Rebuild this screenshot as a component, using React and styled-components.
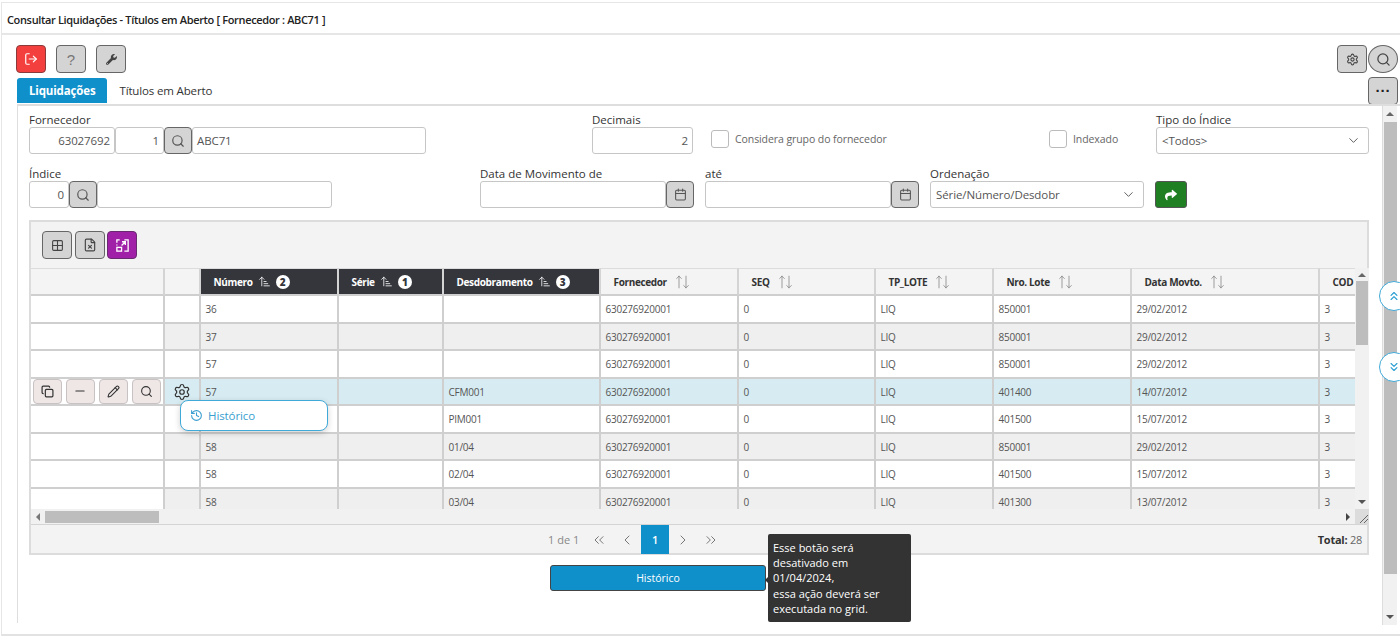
import React from 'react';
import styled, { createGlobalStyle } from 'styled-components';
import {
  LogOut,
  Search,
  Calendar,
  Settings,
  ChevronDown,
  Grid2x2,
  FileX,
  ArrowUpNarrowWide,
  Copy,
  Minus,
  Pencil,
  History,
  ChevronsUp,
  ChevronsDown,
  ChevronsLeft,
  ChevronsRight,
  ChevronLeft,
  ChevronRight,
  MoveUp,
  MoveDown,
} from 'lucide-react';
import { FaWrench, FaShare } from 'react-icons/fa';

const COLUMNS = '134px 36px 138px 105px 157px 138px 137px 118px 138px 188px 80px';

const rows = [
  { num: '36', desd: '', lote: '850001', date: '29/02/2012' },
  { num: '37', desd: '', lote: '850001', date: '29/02/2012' },
  { num: '57', desd: '', lote: '850001', date: '29/02/2012' },
  { num: '57', desd: 'CFM001', lote: '401400', date: '14/07/2012', selected: true },
  { num: '', desd: 'PIM001', lote: '401500', date: '15/07/2012' },
  { num: '58', desd: '01/04', lote: '850001', date: '29/02/2012' },
  { num: '58', desd: '02/04', lote: '401500', date: '15/07/2012' },
  { num: '58', desd: '03/04', lote: '401300', date: '13/07/2012' },
];

function App() {
  return (
    <>
      <GlobalStyle />
      <Frame>
        <TitleBar>Consultar Liquidações - Títulos em Aberto [ Fornecedor : ABC71 ]</TitleBar>
        <Toolbar>
          <IconButton $bg="#f43f3f" $color="#fff" $border="#8a3a3a">
            <LogOut size={14} />
          </IconButton>
          <IconButton>
            <HelpMark>?</HelpMark>
          </IconButton>
          <IconButton>
            <FaWrench size={11} />
          </IconButton>
          <ToolbarRight>
            <IconButton>
              <Settings size={13} />
            </IconButton>
            <RoundButton>
              <Search size={15} />
            </RoundButton>
          </ToolbarRight>
        </Toolbar>
        <TabRow>
          <Tab $active>Liquidações</Tab>
          <Tab>Títulos em Aberto</Tab>
          <MoreButton>···</MoreButton>
        </TabRow>
        <Panel>
          <Content>
            <FormRow>
              <Field $width={397}>
                <Label>Fornecedor</Label>
                <Joined>
                  <Input $width={86} $right>63027692</Input>
                  <Input $width={49} $right>1</Input>
                  <AddonButton>
                    <Search size={14} />
                  </AddonButton>
                  <Input $grow>ABC71</Input>
                </Joined>
              </Field>
              <Field $width={101} $left={166}>
                <Label>Decimais</Label>
                <Input $right>2</Input>
              </Field>
              <CheckField $left={18} $width={338}>
                <CheckBox />
                Considera grupo do fornecedor
              </CheckField>
              <CheckField $left={0} $width={107}>
                <CheckBox />
                Indexado
              </CheckField>
              <Field $width={213}>
                <Label>Tipo do Índice</Label>
                <Select>
                  &lt;Todos&gt;
                  <ChevronDown size={15} strokeWidth={1.5} />
                </Select>
              </Field>
            </FormRow>
            <FormRow>
              <Field $width={303}>
                <Label>Índice</Label>
                <Joined>
                  <Input $width={40} $right>0</Input>
                  <AddonButton>
                    <Search size={14} />
                  </AddonButton>
                  <Input $grow />
                </Joined>
              </Field>
              <Field $width={214} $left={148}>
                <Label>Data de Movimento de</Label>
                <Joined>
                  <Input $grow />
                  <AddonButton>
                    <Calendar size={13} />
                  </AddonButton>
                </Joined>
              </Field>
              <Field $width={214} $left={11}>
                <Label>até</Label>
                <Joined>
                  <Input $grow />
                  <AddonButton>
                    <Calendar size={13} />
                  </AddonButton>
                </Joined>
              </Field>
              <Field $width={214} $left={11}>
                <Label>Ordenação</Label>
                <Select>
                  Série/Número/Desdobr
                  <ChevronDown size={15} strokeWidth={1.5} />
                </Select>
              </Field>
              <GoButton>
                <FaShare size={12} />
              </GoButton>
            </FormRow>

            <GridPanel>
              <GridToolbar>
                <IconButton>
                  <Grid2x2 size={13} />
                </IconButton>
                <IconButton>
                  <FileX size={14} />
                </IconButton>
                <IconButton $bg="#a020a8" $color="#fff" $border="#6a2a70">
                  <svg width="15" height="15" viewBox="0 0 16 16" fill="none" stroke="currentColor" strokeWidth="1.4">
                    <path d="M5 2H2v3M10 2h4v12h-4M2 7v1" />
                    <rect x="2" y="10" width="5" height="4" />
                    <path d="M7 8l4-4M7.5 4H11v3.5" />
                  </svg>
                </IconButton>
              </GridToolbar>
              <GridBody>
                <TableViewport>
                  <HeaderRow>
                    <HeadCell />
                    <HeadCell />
                    <HeadCell $sorted>
                      Número <ArrowUpNarrowWide size={13} strokeWidth={1.5} /> <Badge>2</Badge>
                    </HeadCell>
                    <HeadCell $sorted>
                      Série <ArrowUpNarrowWide size={13} strokeWidth={1.5} /> <Badge>1</Badge>
                    </HeadCell>
                    <HeadCell $sorted>
                      Desdobramento <ArrowUpNarrowWide size={13} strokeWidth={1.5} /> <Badge>3</Badge>
                    </HeadCell>
                    <HeadCell>
                      Fornecedor <SortIcon />
                    </HeadCell>
                    <HeadCell>
                      SEQ <SortIcon />
                    </HeadCell>
                    <HeadCell>
                      TP_LOTE <SortIcon />
                    </HeadCell>
                    <HeadCell>
                      Nro. Lote <SortIcon />
                    </HeadCell>
                    <HeadCell>
                      Data Movto. <SortIcon />
                    </HeadCell>
                    <HeadCell>COD</HeadCell>
                  </HeaderRow>
                  {rows.map((row, i) => (
                    <Row key={i} $alt={i % 2 === 1} $selected={row.selected}>
                      <ActionCell>
                        {row.selected && (
                          <>
                            <RowButton>
                              <Copy size={13} strokeWidth={2.2} />
                            </RowButton>
                            <RowButton>
                              <Minus size={14} />
                            </RowButton>
                            <RowButton>
                              <Pencil size={13} />
                            </RowButton>
                            <RowButton>
                              <Search size={13} />
                            </RowButton>
                          </>
                        )}
                      </ActionCell>
                      <Cell $center>
                        {row.selected && <Settings size={18} color="#333" strokeWidth={1.6} />}
                      </Cell>
                      <Cell>{row.num}</Cell>
                      <Cell />
                      <Cell>{row.desd}</Cell>
                      <Cell>630276920001</Cell>
                      <Cell>0</Cell>
                      <Cell>LIQ</Cell>
                      <Cell>{row.lote}</Cell>
                      <Cell>{row.date}</Cell>
                      <Cell>3</Cell>
                    </Row>
                  ))}
                  <RowMenu>
                    <History size={13} />
                    Histórico
                  </RowMenu>
                </TableViewport>
                <VTrack>
                  <Arrow $dir="up" />
                  <VThumb />
                  <Arrow $dir="down" />
                </VTrack>
                <HTrack>
                  <Arrow $dir="left" />
                  <HThumb />
                  <Arrow $dir="right" />
                </HTrack>
                <Corner>
                  <svg width="11" height="11" viewBox="0 0 11 11" stroke="#666" strokeWidth="1">
                    <path d="M2 10L10 2M6 10l4-4" />
                  </svg>
                </Corner>
              </GridBody>
              <Pager>
                <PageInfo>1 de 1</PageInfo>
                <PageLink>
                  <ChevronsLeft size={16} strokeWidth={1.5} />
                </PageLink>
                <PageLink>
                  <ChevronLeft size={16} strokeWidth={1.5} />
                </PageLink>
                <PageNumber>1</PageNumber>
                <PageLink>
                  <ChevronRight size={16} strokeWidth={1.5} />
                </PageLink>
                <PageLink>
                  <ChevronsRight size={16} strokeWidth={1.5} />
                </PageLink>
                <Total>
                  <b>Total:</b> 28
                </Total>
              </Pager>
            </GridPanel>

            <ActionWrap>
              <ActionButton>
                Histórico
                <Tooltip>
                  Esse botão será
                  <br />
                  desativado em
                  <br />
                  01/04/2024,
                  <br />
                  essa ação deverá ser
                  <br />
                  executada no grid.
                </Tooltip>
              </ActionButton>
            </ActionWrap>
          </Content>
          <PageScroll>
            <Arrow $dir="up" />
            <PageThumb />
            <Arrow $dir="down" />
          </PageScroll>
          <FloatButton $top={175}>
            <ChevronsUp size={14} />
          </FloatButton>
          <FloatButton $top={246}>
            <ChevronsDown size={14} />
          </FloatButton>
        </Panel>
      </Frame>
    </>
  );
}

function SortIcon() {
  return (
    <SortWrap>
      <MoveUp size={14} strokeWidth={1.2} />
      <MoveDown size={14} strokeWidth={1.2} />
    </SortWrap>
  );
}

const GlobalStyle = createGlobalStyle`
  html, body {
    margin: 0;
    height: 100%;
    overflow: hidden;
    background: #fff;
  }
  * {
    box-sizing: border-box;
  }
  body {
    font-family: "Open Sans", "Noto Sans", sans-serif;
    font-size: 11px;
    color: #333;
  }
`;

const Frame = styled.div`
  margin: 2px 0 0 1px;
  width: 1399px;
  height: 634px;
  border-top: 1px solid #e6e6e6;
  border-left: 1px solid #e6e6e6;
  border-bottom: 2px solid #e2e2e2;
`;

const TitleBar = styled.div`
  height: 32px;
  padding: 3px 0 0 5px;
  display: flex;
  align-items: center;
  border-bottom: 2px solid #e6e6e6;
  font-size: 11px;
  font-weight: 600;
  letter-spacing: -0.35px;
  color: #222;
`;

const Toolbar = styled.div`
  height: 42px;
  padding: 10px 2px 0 14px;
  display: flex;
  gap: 10px;
`;

const ToolbarRight = styled.div`
  margin-left: auto;
  display: flex;
  gap: 1px;
`;

const IconButton = styled.button`
  width: 30px;
  height: 28px;
  padding: 0;
  display: flex;
  align-items: center;
  justify-content: center;
  border: 1px solid ${(p) => p.$border || '#666'};
  border-radius: 4px;
  background: ${(p) => p.$bg || '#d4d4d4'};
  color: ${(p) => p.$color || '#444'};
`;

const HelpMark = styled.span`
  font-size: 15px;
  color: #777;
`;

const RoundButton = styled.button`
  width: 30px;
  height: 28px;
  padding: 0;
  display: flex;
  align-items: center;
  justify-content: center;
  border: 1px solid #666;
  border-radius: 50%;
  background: #d4d4d4;
  color: #444;
`;

const TabRow = styled.div`
  height: 27px;
  padding: 1px 2px 0 15px;
  display: flex;
  align-items: stretch;
`;

const Tab = styled.div`
  display: flex;
  align-items: center;
  height: 25px;
  padding: 0 12px;
  border-radius: 3px 3px 0 0;
  font-size: 11.5px;
  letter-spacing: -0.15px;
  font-weight: ${(p) => (p.$active ? 700 : 400)};
  background: ${(p) => (p.$active ? '#0f90cb' : 'transparent')};
  color: ${(p) => (p.$active ? '#fff' : '#333')};
`;

const MoreButton = styled.button`
  margin: -1px 0 0 auto;
  width: 30px;
  height: 28px;
  padding: 0 0 2px;
  border: 1px solid #666;
  border-radius: 4px;
  background: #d4d4d4;
  color: #222;
  font-size: 15px;
  font-weight: 700;
  line-height: 1;
`;

const Panel = styled.div`
  position: relative;
  margin-left: 15px;
  height: 519px;
  display: flex;
  border-top: 2px solid #dedede;
  border-left: 1px solid #dedede;
`;

const Content = styled.div`
  width: 1364px;
  flex: none;
  padding: 7px 13px 0 11px;
`;

const FormRow = styled.div`
  display: flex;
  align-items: flex-end;
  height: 41px;
  margin-bottom: 13px;
`;

const Field = styled.div`
  flex: none;
  width: ${(p) => p.$width}px;
  margin-left: ${(p) => p.$left || 0}px;
`;

const Label = styled.div`
  height: 14px;
  line-height: 14px;
  font-size: 11.5px;
  color: #333;
`;

const Joined = styled.div`
  display: flex;
`;

const Input = styled.div`
  ${(p) => (p.$grow ? 'flex: 1;' : p.$width ? `width: ${p.$width}px;` : '')}
  height: 27px;
  padding: 0 4px;
  display: flex;
  align-items: center;
  justify-content: ${(p) => (p.$right ? 'flex-end' : 'flex-start')};
  border: 1px solid #c6c6c6;
  border-radius: 3px;
  background: #fff;
  font-size: 11.5px;
  letter-spacing: -0.1px;
  color: #555;
`;

const AddonButton = styled.button`
  width: 28px;
  height: 27px;
  padding: 0;
  display: flex;
  align-items: center;
  justify-content: center;
  border: 1px solid #666;
  border-radius: 4px;
  background: #d4d4d4;
  color: #555;
`;

const CheckField = styled.div`
  flex: none;
  width: ${(p) => p.$width}px;
  margin-left: ${(p) => p.$left}px;
  height: 27px;
  padding-bottom: 4px;
  display: flex;
  align-items: center;
  gap: 6px;
  white-space: nowrap;
  font-size: 10.5px;
  letter-spacing: -0.08px;
  color: #666;
`;

const CheckBox = styled.span`
  width: 18px;
  height: 18px;
  border: 1px solid #bbb;
  border-radius: 3px;
  background: #fff;
`;

const Select = styled.div`
  height: 27px;
  padding: 0 7px 0 5px;
  display: flex;
  align-items: center;
  justify-content: space-between;
  border: 1px solid #c6c6c6;
  border-radius: 3px;
  background: #fff;
  font-size: 11.5px;
  letter-spacing: -0.1px;
  color: #555;
`;

const GoButton = styled.button`
  margin-left: 11px;
  width: 32px;
  height: 27px;
  padding: 0;
  display: flex;
  align-items: center;
  justify-content: center;
  border: 1px solid #555;
  border-radius: 3px;
  background: #1f7f22;
  color: #fff;
`;

const GridPanel = styled.div`
  height: 335px;
  margin-top: -1px;
  border: 2px solid #dcdcdc;
  background: #f3f3f3;
`;

const GridToolbar = styled.div`
  height: 46px;
  padding: 9px 0 0 11px;
  display: flex;
  gap: 2.5px;
`;

const GridBody = styled.div`
  display: grid;
  grid-template-columns: 1324px 14px;
  grid-template-rows: 241px 15px;
`;

const TableViewport = styled.div`
  position: relative;
  overflow: hidden;
  background: #fff;
`;

const HeaderRow = styled.div`
  display: grid;
  grid-template-columns: ${COLUMNS};
  height: 28px;
`;

const HeadCell = styled.div`
  display: flex;
  align-items: center;
  gap: 5px;
  padding-left: 12.5px;
  white-space: nowrap;
  font-size: 10px;
  letter-spacing: -0.35px;
  font-weight: 700;
  border-top: 1px solid #dcdcdc;
  border-right: 2px solid #d4d4d4;
  border-bottom: 2px solid #cfcfcf;
  background: ${(p) => (p.$sorted ? '#35363c' : '#f4f4f4')};
  color: ${(p) => (p.$sorted ? '#fff' : '#333')};
`;

const Badge = styled.span`
  width: 14px;
  height: 14px;
  display: flex;
  align-items: center;
  justify-content: center;
  border-radius: 50%;
  background: #fff;
  color: #35363c;
  font-size: 10px;
  font-weight: 800;
`;

const SortWrap = styled.span`
  display: inline-flex;
  color: #777;
  & svg + svg {
    margin-left: -7px;
  }
`;

const Row = styled.div`
  display: grid;
  grid-template-columns: ${COLUMNS};
  height: 27.5px;
  background: ${(p) => (p.$selected ? '#d7ecf2' : p.$alt ? '#efefef' : '#fff')};
`;

const Cell = styled.div`
  display: flex;
  align-items: center;
  justify-content: ${(p) => (p.$center ? 'center' : 'flex-start')};
  padding: 1px 0 0 ${(p) => (p.$center ? 0 : 4.5)}px;
  border-right: 2px solid #cfcfcf;
  border-bottom: 2px solid #cfcfcf;
  font-size: 10px;
  letter-spacing: -0.25px;
  color: #555;
`;

const ActionCell = styled(Cell)`
  gap: 4px;
  padding: 0 0 0 1.5px;
  background: #fff;
`;

const RowButton = styled.button`
  width: 29px;
  height: 25px;
  padding: 0;
  display: flex;
  align-items: center;
  justify-content: center;
  border: 1px solid #c9c2c2;
  border-radius: 4px;
  background: #efe6e6;
  color: #333;
`;

const RowMenu = styled.div`
  position: absolute;
  left: 149px;
  top: 132px;
  width: 148px;
  height: 31px;
  padding-left: 9px;
  display: flex;
  align-items: center;
  gap: 5px;
  border: 1px solid #3fa9d8;
  border-radius: 8px;
  background: #fff;
  box-shadow: 0 2px 6px rgba(0, 0, 0, 0.18);
  color: #3a9fd0;
  font-size: 11.5px;
  letter-spacing: -0.1px;
`;

const VTrack = styled.div`
  display: flex;
  flex-direction: column;
  align-items: center;
  background: #f1f1f1;
  padding: 5px 0;
`;

const VThumb = styled.div`
  width: 12px;
  height: 64px;
  margin-top: 4px;
  margin-bottom: auto;
  background: #bdbdbd;
`;

const HTrack = styled.div`
  display: flex;
  align-items: center;
  padding: 0 5px;
  background: #f1f1f1;
`;

const HThumb = styled.div`
  width: 114px;
  height: 12px;
  margin-left: 5px;
  margin-right: auto;
  background: #bdbdbd;
`;

const Corner = styled.div`
  display: flex;
  align-items: flex-end;
  justify-content: flex-end;
  background: #dcdcdc;
`;

const Arrow = styled.span`
  width: 0;
  height: 0;
  flex: none;
  border: 4px solid transparent;
  ${(p) => p.$dir === 'up' && 'border-bottom-color: #666; border-top-width: 0;'}
  ${(p) => p.$dir === 'down' && 'border-top-color: #555; border-bottom-width: 0;'}
  ${(p) => p.$dir === 'left' && 'border-right-color: #777; border-left-width: 0;'}
  ${(p) => p.$dir === 'right' && 'border-left-color: #444; border-right-width: 0;'}
`;

const Pager = styled.div`
  height: 30px;
  padding: 0 5px 0 517px;
  display: flex;
  align-items: center;
  border-top: 1px solid #d4d4d4;
  color: #888;
  font-size: 11px;
`;

const PageInfo = styled.span`
  margin-right: 6px;
`;

const PageLink = styled.span`
  width: 28px;
  display: flex;
  justify-content: center;
  color: #777;
`;

const PageNumber = styled.span`
  width: 28px;
  height: 100%;
  display: flex;
  align-items: center;
  justify-content: center;
  background: #0f90cb;
  color: #fff;
  font-weight: 600;
`;

const Total = styled.span`
  margin-left: auto;
  letter-spacing: -0.25px;
  color: #666;
  b {
    color: #333;
  }
`;

const ActionWrap = styled.div`
  padding: 10px 0 0 521px;
`;

const ActionButton = styled.button`
  position: relative;
  display: block;
  width: 216px;
  height: 26px;
  padding: 0;
  border: 1px solid #444;
  border-radius: 3px;
  background: #0f90cb;
  color: #fff;
  font-family: inherit;
  font-size: 10.5px;
`;

const Tooltip = styled.div`
  position: absolute;
  left: 217px;
  top: -32px;
  width: 143px;
  height: 88px;
  padding: 6px 5px;
  border-radius: 2px;
  background: #333;
  color: #fff;
  font-size: 11px;
  line-height: 15.2px;
  text-align: left;
  &::before {
    content: '';
    position: absolute;
    left: -3px;
    top: 43px;
    border: 3px solid transparent;
    border-left-width: 0;
    border-right-color: #333;
  }
`;

const PageScroll = styled.div`
  flex: none;
  width: 15px;
  height: 519px;
  display: flex;
  flex-direction: column;
  align-items: center;
  padding: 6px 0 6px;
  border-left: 1px solid #ddd;
  background: #f1f1f1;
`;

const PageThumb = styled.div`
  width: 13px;
  height: 452px;
  margin-top: 6px;
  margin-bottom: auto;
  background: #bdbdbd;
`;

const FloatButton = styled.button`
  position: absolute;
  left: 1361px;
  top: ${(p) => p.$top}px;
  width: 30px;
  height: 30px;
  padding: 0;
  display: flex;
  align-items: center;
  justify-content: center;
  border: 1px solid #3fa9d8;
  border-radius: 50%;
  background: #fff;
  color: #2b9ed2;
`;

export default App;
